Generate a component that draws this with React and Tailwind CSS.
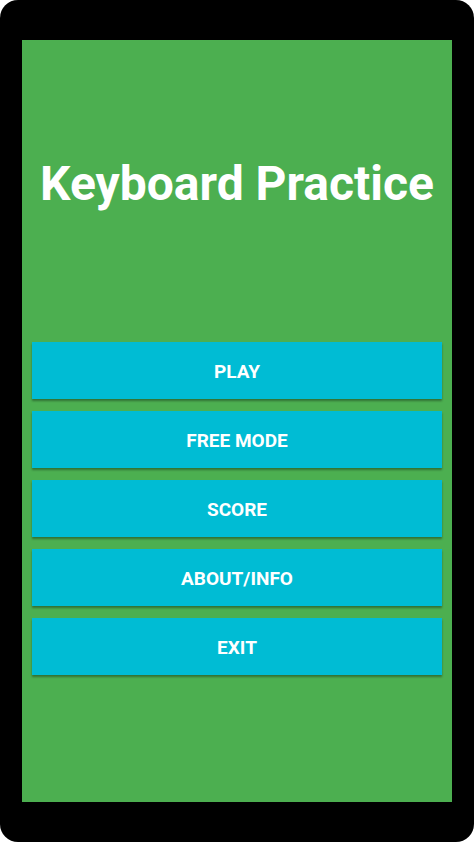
const items = ['PLAY', 'FREE MODE', 'SCORE', 'ABOUT/INFO', 'EXIT']

export default function App() {
  return (
    <div className="w-[474px] h-[842px] bg-white" style={{ fontFamily: 'Roboto, "Liberation Sans", sans-serif' }}>
      <div className="w-full h-full bg-black rounded-[18px] pt-[40px] pb-[40px] px-[22px]">
        <div className="h-full bg-[#4caf50] px-[10px] flex flex-col">
          <h1 className="mt-[118px] text-center text-white font-bold text-[48px] leading-[52px] whitespace-nowrap">
            Keyboard Practice
          </h1>
          <div className="mt-[132px] flex flex-col gap-[12px]">
            {items.map(label => (
              <button
                key={label}
                className="h-[57px] w-full pt-[3px] bg-[#00bcd4] text-white font-bold text-[19px] shadow-[0_2px_2px_rgba(0,0,0,0.35)]"
              >
                {label}
              </button>
            ))}
          </div>
        </div>
      </div>
    </div>
  )
}
